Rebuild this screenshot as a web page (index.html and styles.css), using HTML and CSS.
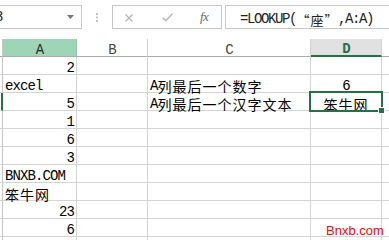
FILE: index.html
```html
<!DOCTYPE html>
<html>
<head>
<meta charset="utf-8">
<link rel="stylesheet" href="styles.css">
</head>
<body>
<div class="toolbar">
  <div class="namebox"><span class="nametext">D3</span><svg class="arrow" width="7" height="4" viewBox="0 0 7 4"><path d="M0 0H7L3.5 4Z" fill="#777"/></svg></div>
  <svg class="grip" width="2" height="9" viewBox="0 0 2 9"><rect x="0" y="0" width="2" height="2" fill="#c4c4c4"/><rect x="0" y="3.5" width="2" height="2" fill="#c4c4c4"/><rect x="0" y="7" width="2" height="2" fill="#c4c4c4"/></svg>
  <div class="fxbox">
    <svg class="xicon" width="8" height="8" viewBox="0 0 8 8"><path d="M0.5 0.5L7.5 7.5M7.5 0.5L0.5 7.5" stroke="#b4b4b4" stroke-width="1.2" fill="none"/></svg>
    <svg class="check" width="11" height="9" viewBox="0 0 11 9"><path d="M0.7 4.6L3.8 7.8L10.4 0.8" stroke="#bdbdbd" stroke-width="1.6" fill="none"/></svg>
    <span class="fx">fx</span>
  </div>
  <div class="formula">=LOOKUP(<span class="fq">“</span><span class="fc">座</span><span class="fq">”</span>,A:A)</div>
</div>
<div class="sheet">
  <div class="h strip"></div><div class="h hsel">A</div><div class="h">B</div><div class="h">C</div><div class="h hact">D</div><div class="h hlast"></div>

  <div class="c strip"></div><div class="c r">2</div><div class="c"></div><div class="c"></div><div class="c"></div><div class="c"></div>
  <div class="c strip"></div><div class="c">excel</div><div class="c"></div><div class="c">A<span class="cjk">列最后一个数字</span></div><div class="c m">6</div><div class="c"></div>
  <div class="c strip act"></div><div class="c r">5</div><div class="c"></div><div class="c">A<span class="cjk">列最后一个汉字文本</span></div><div class="c m sel"><span class="cjk">笨牛网</span></div><div class="c"></div>
  <div class="c strip"></div><div class="c r">1</div><div class="c"></div><div class="c"></div><div class="c"></div><div class="c"></div>
  <div class="c strip"></div><div class="c r">6</div><div class="c"></div><div class="c"></div><div class="c"></div><div class="c"></div>
  <div class="c strip"></div><div class="c r">3</div><div class="c"></div><div class="c"></div><div class="c"></div><div class="c"></div>
  <div class="c strip"></div><div class="c">BNXB.COM</div><div class="c"></div><div class="c"></div><div class="c"></div><div class="c"></div>
  <div class="c strip"></div><div class="c"><span class="cjk">笨牛网</span></div><div class="c"></div><div class="c"></div><div class="c"></div><div class="c"></div>
  <div class="c strip"></div><div class="c r">23</div><div class="c"></div><div class="c"></div><div class="c"></div><div class="c"></div>
  <div class="c strip"></div><div class="c r">6</div><div class="c"></div><div class="c"></div><div class="c"></div><div class="c"></div>
  <div class="c strip"></div><div class="c"></div><div class="c"></div><div class="c"></div><div class="c"></div><div class="c"></div>
</div>
<div class="watermark">Bnxb.com</div>
</body>
</html>
```
FILE: styles.css
```css
html, body {
  margin: 0;
  padding: 0;
}
body {
  width: 389px;
  height: 240px;
  overflow: hidden;
  background: #fff;
  position: relative;
  font-family: "Liberation Mono", "Noto Sans CJK SC", monospace;
  color: #000;
}
.toolbar {
  display: flex;
  align-items: flex-start;
  height: 39px;
  padding-top: 5px;
  box-sizing: border-box;
  white-space: nowrap;
}
.namebox {
  flex: none;
  margin-left: -17px;
  width: 99px;
  height: 24px;
  box-sizing: border-box;
  border: 1px solid #c6c6c6;
  display: flex;
  align-items: center;
  justify-content: space-between;
  padding: 0 7px 0 4px;
  font-size: 14px;
  letter-spacing: -1.4px;
  color: #222;
}
.arrow { display: block; }
.grip {
  flex: none;
  display: block;
  margin-left: 14px;
  margin-top: 8px;
}
.fxbox {
  flex: none;
  margin-left: 14px;
  width: 110px;
  height: 24px;
  box-sizing: border-box;
  border: 1px solid #c6c6c6;
  display: flex;
  align-items: center;
  padding-left: 12px;
}
.xicon { display: block; flex: none; margin-top: 2px; }
.check { display: block; flex: none; margin-left: 29px; margin-top: 1px; }
.fx {
  margin-left: 27px;
  font-family: "Liberation Serif", serif;
  font-style: italic;
  font-size: 13px;
  color: #666;
  letter-spacing: -0.5px;
}
.formula {
  flex: none;
  margin-left: 3px;
  width: 200px;
  height: 24px;
  box-sizing: border-box;
  border: 1px solid #c6c6c6;
  border-right: none;
  padding: 5px 0 0 14px;
  font-size: 14px;
  line-height: 17px;
  letter-spacing: -1.4px;
  color: #222;
}
.fq, .fc {
  display: inline-block;
  width: 14px;
  text-align: center;
  letter-spacing: 0;
  font-family: "Noto Sans CJK SC", sans-serif;
  font-size: 13px;
  line-height: 17px;
  vertical-align: top;
}
.sheet {
  display: grid;
  grid-template-columns: 3px 74px 71px 163px 71px 30px;
  grid-auto-rows: 18px;
  font-size: 14px;
  letter-spacing: -0.9px;
}
.h, .c {
  box-sizing: border-box;
  border-right: 1px solid #d4d4d4;
  display: flex;
  align-items: flex-end;
  line-height: 11px;
  white-space: nowrap;
  overflow: visible;
}
.h {
  border-bottom: 1px solid #ababab;
  justify-content: center;
  color: #444;
}
.c {
  border-bottom: 1px solid #d4d4d4;
  padding: 0 2px;
}
.h.strip, .c.strip {
  padding: 0;
  border-right: 1px solid #c6c6c6;
}
.c.strip.act {
  border-right: 2px solid #217346;
}
.hsel {
  background: #9fd5b7;
  border-right-color: #8ec6a6;
  color: #2b2b2b;
}
.hact {
  background: #e1e1e1;
  border-bottom: 2px solid #217346;
  color: #217346;
  font-weight: bold;
}
.hlast { border-right: none; }
.r { justify-content: flex-end; }
.m { justify-content: center; }
.cjk {
  font-family: "Noto Sans CJK SC", sans-serif;
  font-size: 14px;
  letter-spacing: 1px;
  vertical-align: 1px;
}
.sel { position: relative; }
.sel::after {
  content: "";
  position: absolute;
  left: -2px;
  top: -2px;
  right: -2px;
  bottom: -2px;
  border: 2px solid #217346;
}
.sel::before {
  content: "";
  position: absolute;
  left: 67px;
  top: 14px;
  width: 5px;
  height: 5px;
  background: #217346;
  border: 1px solid #fff;
  z-index: 1;
}
.watermark {
  position: absolute;
  left: 326px;
  top: 224px;
  font-family: "Liberation Sans", Arial, sans-serif;
  font-size: 13px;
  line-height: 13px;
  color: #ff0000;
}
```
